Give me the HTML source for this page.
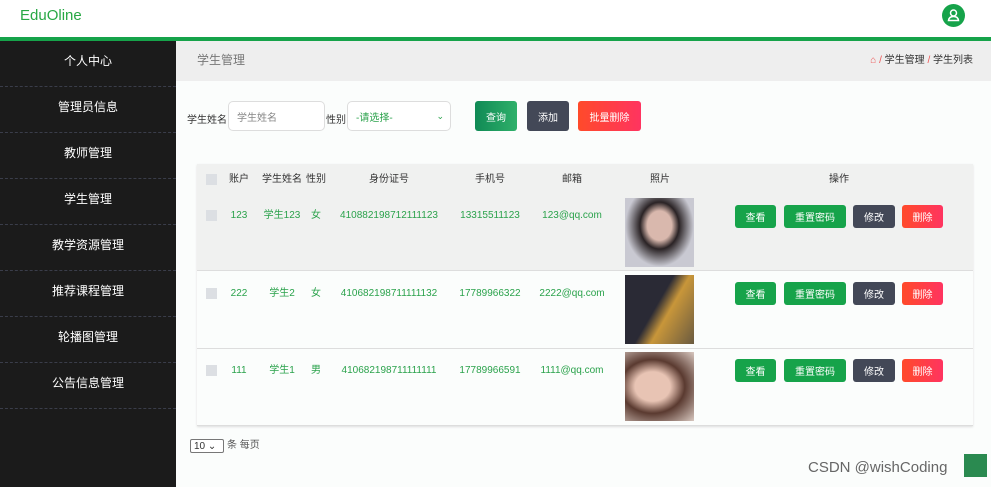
<!DOCTYPE html>
<html><head><meta charset="utf-8"><style>
*{margin:0;padding:0;box-sizing:border-box}
body{width:991px;height:487px;overflow:hidden;background:#fbfdfc;font-family:"Liberation Sans","Noto Sans CJK SC",sans-serif;font-size:11px;color:#333;position:relative}
.hdr{position:absolute;left:0;top:0;width:991px;height:37px;background:#fff}
.logo{position:absolute;left:20px;top:7px;font-size:15px;color:#27a844}
.av{position:absolute;left:942px;top:4px;width:23px;height:23px;border-radius:50%;background:#16a34a}
.bar{position:absolute;left:0;top:37px;width:991px;height:4px;background:#16a34a}
.side{position:absolute;left:0;top:41px;width:176px;height:446px;background:#1b1b1b}
.side div{height:46px;display:flex;align-items:center;justify-content:center;padding-bottom:6px;color:#fff;font-size:12px;border-bottom:1px dashed #3a3d4a}
.tb{position:absolute;left:176px;top:41px;width:815px;height:40px;background:#eeeeee}
.tb .t{position:absolute;left:21px;top:11px;font-size:12px;color:#777;line-height:16px}
.tb .bc{position:absolute;right:18px;top:14px;font-size:10px;color:#333;line-height:12px}
.lbl{position:absolute;top:115px;font-size:10px;color:#333;line-height:12px}
.inp{position:absolute;top:101px;height:30px;border:1px solid #ddd;border-radius:5px;background:#fff;font-size:10px;padding-left:8px;display:flex;align-items:center}
.btn{position:absolute;height:30px;display:flex;align-items:center;justify-content:center;color:#fff;font-size:10px;border-radius:3px}
.tbl{position:absolute;left:197px;top:164px;width:776px;height:262px;background:#fbfdfc;box-shadow:0 1px 2px #ddd}
.hrow{position:absolute;left:0;top:0;width:776px;height:28px;background:#f0f1f0}
.row{position:absolute;left:0;width:776px;height:77px;border-bottom:1px solid #ddd}
.c{position:absolute;font-size:10px;line-height:12px;height:12px;text-align:center;transform:translateX(-50%);white-space:nowrap}
.h{top:10px;color:#333}
.g{color:#2aa24b}
.cb{position:absolute;left:9px;width:11px;height:11px;background:#dcdfe3}
.ph{position:absolute;left:428px;width:69px;height:69px}
.sb{position:absolute;height:23px;display:flex;align-items:center;justify-content:center;color:#fff;font-size:10px;border-radius:3px}
</style></head><body>
<div class="hdr"><div class="logo">EduOline</div>
<div class="av"><svg width="23" height="23" viewBox="0 0 23 23"><circle cx="11.5" cy="9" r="3" fill="none" stroke="#fff" stroke-width="1.5"/><path d="M6.5 16.5 Q7 12.5 11.5 12.5 Q16 12.5 16.5 16.5 Z" fill="none" stroke="#fff" stroke-width="1.5"/></svg></div></div>
<div class="bar"></div>
<div class="side"><div>个人中心</div><div>管理员信息</div><div>教师管理</div><div>学生管理</div><div>教学资源管理</div><div>推荐课程管理</div><div>轮播图管理</div><div>公告信息管理</div></div>
<div class="tb"><div class="t">学生管理</div><div class="bc"><span style="color:#e55">⌂</span> <span style="color:#e55">/</span> 学生管理 <span style="color:#e55">/</span> 学生列表</div></div>
<div class="lbl" style="left:187px">学生姓名</div>
<div class="inp" style="left:228px;width:97px;color:#888">学生姓名</div>
<div class="lbl" style="left:326px">性别</div>
<div class="inp" style="left:347px;width:104px;color:#2aa24b">-请选择-<span style="position:absolute;right:6px;font-size:9px">⌄</span></div>
<div class="btn" style="left:475px;top:101px;width:42px;background:linear-gradient(90deg,#108a55,#2fb06a)">查询</div>
<div class="btn" style="left:527px;top:101px;width:42px;background:#434857">添加</div>
<div class="btn" style="left:578px;top:101px;width:63px;background:linear-gradient(90deg,#ff4a2a,#ff3460)">批量删除</div>
<div class="tbl">
<div class="hrow"><span class="cb" style="top:10px"></span>
<span class="c h" style="left:42px">账户</span><span class="c h" style="left:85px">学生姓名</span><span class="c h" style="left:119px">性别</span><span class="c h" style="left:192px">身份证号</span><span class="c h" style="left:293px">手机号</span><span class="c h" style="left:375px">邮箱</span><span class="c h" style="left:463px">照片</span><span class="c h" style="left:642px">操作</span></div>
<div class="row" style="top:28px;height:79px;background:#f0f1f0">
<span class="cb" style="top:18px"></span><span class="c g" style="left:42px;top:18px">123</span><span class="c g" style="left:85px;top:18px">学生123</span><span class="c g" style="left:119px;top:18px">女</span><span class="c g" style="left:192px;top:18px">410882198712111123</span><span class="c g" style="left:293px;top:18px">13315511123</span><span class="c g" style="left:375px;top:18px">123@qq.com</span>
<div class="ph" style="top:6px;background:radial-gradient(ellipse at 50% 40%,#d9b8ad 0 25%,#2a2325 40%,#c9c9d2 70%)"></div>
<div class="sb" style="left:538px;top:13px;width:41px;background:#16a34a">查看</div><div class="sb" style="left:587px;top:13px;width:62px;background:#16a34a">重置密码</div><div class="sb" style="left:656px;top:13px;width:42px;background:#434857">修改</div><div class="sb" style="left:705px;top:13px;width:41px;background:linear-gradient(90deg,#ff4a2a,#ff3460)">删除</div></div>
<div class="row" style="top:108px">
<span class="cb" style="top:16px"></span><span class="c g" style="left:42px;top:16px">222</span><span class="c g" style="left:85px;top:16px">学生2</span><span class="c g" style="left:119px;top:16px">女</span><span class="c g" style="left:192px;top:16px">410682198711111132</span><span class="c g" style="left:293px;top:16px">17789966322</span><span class="c g" style="left:375px;top:16px">2222@qq.com</span>
<div class="ph" style="top:3px;background:linear-gradient(120deg,#2a2a35 0 45%,#c8963a 60%,#6a5a40)"></div>
<div class="sb" style="left:538px;top:10px;width:41px;background:#16a34a">查看</div><div class="sb" style="left:587px;top:10px;width:62px;background:#16a34a">重置密码</div><div class="sb" style="left:656px;top:10px;width:42px;background:#434857">修改</div><div class="sb" style="left:705px;top:10px;width:41px;background:linear-gradient(90deg,#ff4a2a,#ff3460)">删除</div></div>
<div class="row" style="top:185px">
<span class="cb" style="top:16px"></span><span class="c g" style="left:42px;top:16px">111</span><span class="c g" style="left:85px;top:16px">学生1</span><span class="c g" style="left:119px;top:16px">男</span><span class="c g" style="left:192px;top:16px">410682198711111111</span><span class="c g" style="left:293px;top:16px">17789966591</span><span class="c g" style="left:375px;top:16px">1111@qq.com</span>
<div class="ph" style="top:3px;background:radial-gradient(ellipse at 40% 50%,#e8c4b4 0 30%,#5a3a30 55%,#d8c8c0)"></div>
<div class="sb" style="left:538px;top:10px;width:41px;background:#16a34a">查看</div><div class="sb" style="left:587px;top:10px;width:62px;background:#16a34a">重置密码</div><div class="sb" style="left:656px;top:10px;width:42px;background:#434857">修改</div><div class="sb" style="left:705px;top:10px;width:41px;background:linear-gradient(90deg,#ff4a2a,#ff3460)">删除</div></div>
</div>
<div style="position:absolute;left:190px;top:439px;width:34px;height:14px;border:1px solid #777;border-radius:2px;font-size:10px;display:flex;align-items:center;padding-left:3px;background:#fff">10 ⌄</div>
<div style="position:absolute;left:227px;top:440px;font-size:10px;line-height:12px;color:#555">条 每页</div>
<div style="position:absolute;left:808px;top:459px;font-size:15px;color:#666;line-height:18px">CSDN @wishCoding</div>
<div style="position:absolute;left:964px;top:454px;width:23px;height:23px;background:#2a8a50"></div>
</body></html>
